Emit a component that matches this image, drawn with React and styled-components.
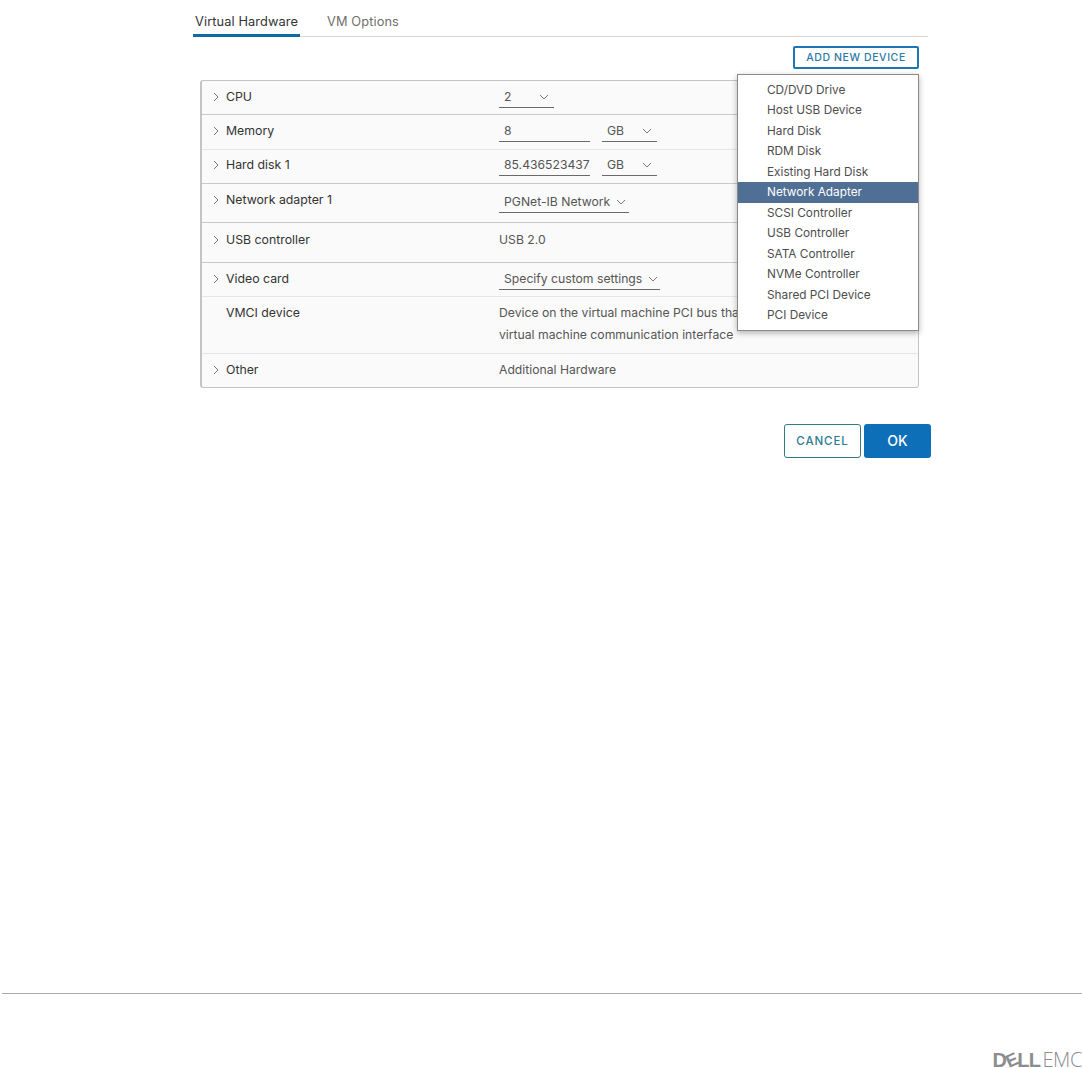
import React from 'react';
import styled, { createGlobalStyle } from 'styled-components';

const GlobalStyle = createGlobalStyle`
  html, body {
    margin: 0;
    padding: 0;
    background: #fff;
  }
  body {
    font-family: Inter, "Open Sans", "Liberation Sans", sans-serif;
    color: #454545;
    overflow: hidden;
  }
`;

const Page = styled.div`
  width: 1082px;
  height: 1068px;
  display: flex;
  flex-direction: column;
  overflow: hidden;
`;

const Dialog = styled.div`
  width: 738px;
  margin-left: 193px;
  flex: 1;
`;

const Tabs = styled.div`
  display: flex;
  height: 37px;
  width: 735px;
  border-bottom: 1px solid #d8d8d8;
  box-sizing: border-box;
`;

const Tab = styled.div`
  box-sizing: border-box;
  height: 37px;
  padding: 13px 2px 0;
  margin-right: 25px;
  font-size: 12.8px;
  line-height: 18px;
  letter-spacing: 0.1px;
  color: ${({ $active }) => ($active ? '#333' : '#6f6f6f')};
  border-bottom: ${({ $active }) => ($active ? '3px solid #0f6ba8' : 'none')};
`;

const Toolbar = styled.div`
  display: flex;
  justify-content: flex-end;
  width: 726px;
  padding-top: 9px;
  height: 34px;
`;

const AddButton = styled.button`
  width: 126px;
  height: 23px;
  padding: 0;
  background: #fff;
  border: 2px solid #1d76b3;
  border-radius: 2px;
  color: #2a7aa6;
  font: 500 10.5px/19px Inter, "Open Sans", sans-serif;
  letter-spacing: 0.6px;
`;

const TableWrap = styled.div`
  position: relative;
  margin-left: 7px;
  width: 719px;
`;

const Table = styled.div`
  box-sizing: border-box;
  border: 1px solid #c4c4c4;
  border-left-width: 2px;
  border-radius: 3px;
  background: #fafafa;
`;

const Row = styled.div`
  box-sizing: border-box;
  height: ${({ $h }) => $h}px;
  display: grid;
  grid-template-columns: 297px 1fr;
  padding-top: ${({ $top }) => $top || 7}px;
  border-bottom: 1px solid ${({ $strong }) => ($strong ? '#c9c9c9' : '#e6e6e6')};
  &:last-child {
    border-bottom: none;
  }
`;

const Label = styled.div`
  display: flex;
  align-items: center;
  height: 18px;
  padding-left: 11px;
  font-size: 12.3px;
  line-height: 18px;
  color: #333;
`;

const Caret = styled.svg`
  width: 6px;
  height: 10px;
  margin-right: 7px;
  flex: none;
  fill: none;
  stroke: #777;
  stroke-width: 1;
`;

const LabelGap = styled.span`
  width: 13px;
  flex: none;
`;

const Cell = styled.div`
  display: flex;
  gap: 12px;
  font-size: 12.2px;
  line-height: 18px;
  color: #555;
`;

const Field = styled.div`
  box-sizing: border-box;
  width: ${({ $w }) => $w}px;
  height: 20px;
  margin-top: ${({ $drop }) => $drop || 0}px;
  padding: 0 5px;
  display: flex;
  align-items: flex-start;
  justify-content: space-between;
  border-bottom: 1px solid #6a6a6a;
  white-space: nowrap;
`;

const Chevron = styled.svg`
  width: 10px;
  height: 6px;
  margin: 6px 0 0 6px;
  flex: none;
  fill: none;
  stroke: #777;
  stroke-width: 1;
`;

const Text = styled.div`
  line-height: ${({ $lh }) => $lh || 18}px;
  margin-top: ${({ $lh }) => ($lh ? -2 : 0)}px;
`;

const Menu = styled.ul`
  position: absolute;
  top: -6px;
  right: 0;
  width: 182px;
  height: 257px;
  box-sizing: border-box;
  margin: 0;
  padding: 4.5px 0 0;
  list-style: none;
  background: #fff;
  border: 1.5px solid #8a8a8a;
  box-shadow: 0 2px 6px rgba(0, 0, 0, 0.3);
`;

const MenuItem = styled.li`
  height: 20.5px;
  padding-left: 29px;
  font-size: 11.8px;
  line-height: 20px;
  color: ${({ $active }) => ($active ? '#fff' : '#4d4d4d')};
  background: ${({ $active }) => ($active ? '#4f6f94' : 'transparent')};
`;

const Actions = styled.div`
  display: flex;
  justify-content: flex-end;
  gap: 3px;
  margin-top: 36px;
`;

const Button = styled.button`
  box-sizing: border-box;
  width: ${({ $w }) => $w}px;
  height: 34px;
  padding: 0;
  border-radius: 3px;
  border: ${({ $primary }) => ($primary ? 'none' : '1.5px solid #2f7c85')};
  background: ${({ $primary }) => ($primary ? '#0d6fb8' : '#fff')};
  color: ${({ $primary }) => ($primary ? '#fff' : '#2f7c90')};
  font: ${({ $primary }) => ($primary ? '500 14px/18px' : '500 11.5px/18px')} Inter, "Open Sans", sans-serif;
  letter-spacing: ${({ $primary }) => ($primary ? 0 : 0.9)}px;
`;

const Footer = styled.footer`
  box-sizing: border-box;
  height: 75px;
  margin-left: 2px;
  padding-top: 58px;
  border-top: 1px solid #a8a8a8;
  display: flex;
  justify-content: flex-end;
  align-items: flex-start;
`;

const Logo = styled.div`
  display: flex;
  align-items: center;
  height: 16px;
  color: #8b8d8f;
  font-family: "Liberation Sans", Arial, sans-serif;
  font-size: 20px;
  line-height: 16px;
`;

const LogoBold = styled.span`
  font-weight: 700;
  letter-spacing: -0.6px;
`;

const LogoTilt = styled.span`
  display: inline-block;
  font-weight: 700;
  font-size: 18px;
  margin: 0 -0.5px;
  transform: rotate(-24deg);
`;

const LogoLight = styled.span`
  font-family: "Open Sans", "Liberation Sans", sans-serif;
  font-weight: 300;
  margin-left: 2px;
  letter-spacing: -0.4px;
`;

const CaretIcon = () => (
  <Caret viewBox="0 0 6 10">
    <path d="M1 1l4 4-4 4" />
  </Caret>
);

const ChevronIcon = () => (
  <Chevron viewBox="0 0 10 6">
    <path d="M1 1l4 4 4-4" />
  </Chevron>
);

const Select = ({ w, value, drop }) => (
  <Field $w={w} $drop={drop}>
    <span>{value}</span>
    <ChevronIcon />
  </Field>
);

const menuItems = [
  'CD/DVD Drive',
  'Host USB Device',
  'Hard Disk',
  'RDM Disk',
  'Existing Hard Disk',
  'Network Adapter',
  'SCSI Controller',
  'USB Controller',
  'SATA Controller',
  'NVMe Controller',
  'Shared PCI Device',
  'PCI Device',
];

const App = () => (
  <Page>
    <GlobalStyle />
    <Dialog>
      <Tabs>
        <Tab $active>Virtual Hardware</Tab>
        <Tab>VM Options</Tab>
      </Tabs>
      <Toolbar>
        <AddButton>ADD NEW DEVICE</AddButton>
      </Toolbar>
      <TableWrap>
        <Table>
          <Row $h={34} $strong>
            <Label><CaretIcon />CPU</Label>
            <Cell><Select w={55} value="2" /></Cell>
          </Row>
          <Row $h={35}>
            <Label><CaretIcon />Memory</Label>
            <Cell>
              <Field $w={91}>8</Field>
              <Select w={55} value="GB" />
            </Cell>
          </Row>
          <Row $h={34} $strong $top={6}>
            <Label><CaretIcon />Hard disk 1</Label>
            <Cell>
              <Field $w={91}>85.436523437</Field>
              <Select w={55} value="GB" />
            </Cell>
          </Row>
          <Row $h={39} $strong>
            <Label><CaretIcon />Network adapter 1</Label>
            <Cell><Select w={130} value="PGNet-IB Network" drop={2} /></Cell>
          </Row>
          <Row $h={40} $strong $top={8}>
            <Label><CaretIcon />USB controller</Label>
            <Cell><Text>USB 2.0</Text></Cell>
          </Row>
          <Row $h={34}>
            <Label><CaretIcon />Video card</Label>
            <Cell><Select w={161} value="Specify custom settings" /></Cell>
          </Row>
          <Row $h={57}>
            <Label><LabelGap />VMCI device</Label>
            <Cell>
              <Text $lh={22}>
                Device on the virtual machine PCI bus that
                <br />
                virtual machine communication interface
              </Text>
            </Cell>
          </Row>
          <Row $h={33}>
            <Label><CaretIcon />Other</Label>
            <Cell><Text>Additional Hardware</Text></Cell>
          </Row>
        </Table>
        <Menu>
          {menuItems.map((item) => (
            <MenuItem key={item} $active={item === 'Network Adapter'}>
              {item}
            </MenuItem>
          ))}
        </Menu>
      </TableWrap>
      <Actions>
        <Button $w={77}>CANCEL</Button>
        <Button $w={67} $primary>OK</Button>
      </Actions>
    </Dialog>
    <Footer>
      <Logo>
        <LogoBold>D</LogoBold>
        <LogoTilt>E</LogoTilt>
        <LogoBold>LL</LogoBold>
        <LogoLight>EMC</LogoLight>
      </Logo>
    </Footer>
  </Page>
);

export default App;
